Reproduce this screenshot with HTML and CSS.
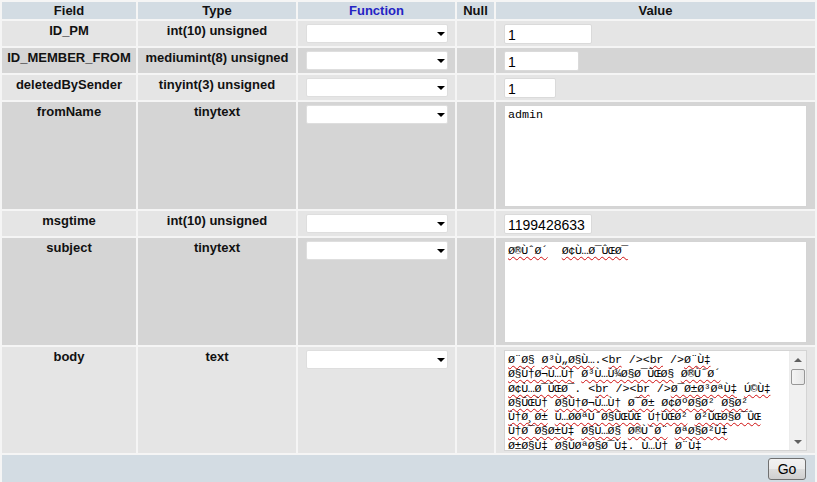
FILE: index.html
```html
<!DOCTYPE html>
<html>
<head>
<meta charset="utf-8">
<title>Insert row</title>
<link rel="stylesheet" href="styles.css">
</head>
<body>
<form class="edit-form">
<table class="grid">
  <colgroup>
    <col class="c-field"><col class="c-type"><col class="c-func"><col class="c-null"><col class="c-value">
  </colgroup>
  <thead>
    <tr>
      <th>Field</th>
      <th>Type</th>
      <th><a class="hlink" href="#">Function</a></th>
      <th>Null</th>
      <th>Value</th>
    </tr>
  </thead>
  <tbody>
    <tr class="odd">
      <td class="name">ID_PM</td>
      <td class="name">int(10) unsigned</td>
      <td class="func"><span class="sel-wrap"><select class="sel"><option></option></select></span></td>
      <td></td>
      <td class="val"><input class="in w88" type="text" value="1"></td>
    </tr>
    <tr class="even">
      <td class="name">ID_MEMBER_FROM</td>
      <td class="name">mediumint(8) unsigned</td>
      <td class="func"><span class="sel-wrap"><select class="sel"><option></option></select></span></td>
      <td></td>
      <td class="val"><input class="in w75" type="text" value="1"></td>
    </tr>
    <tr class="odd">
      <td class="name">deletedBySender</td>
      <td class="name">tinyint(3) unsigned</td>
      <td class="func"><span class="sel-wrap"><select class="sel"><option></option></select></span></td>
      <td></td>
      <td class="val"><input class="in w52" type="text" value="1"></td>
    </tr>
    <tr class="even">
      <td class="name">fromName</td>
      <td class="name">tinytext</td>
      <td class="func"><span class="sel-wrap"><select class="sel"><option></option></select></span></td>
      <td></td>
      <td class="val"><div class="ta" role="textbox"><div class="ta-text"><div class="ln">admin</div></div></div></td>
    </tr>
    <tr class="odd">
      <td class="name">msgtime</td>
      <td class="name">int(10) unsigned</td>
      <td class="func"><span class="sel-wrap"><select class="sel"><option></option></select></span></td>
      <td></td>
      <td class="val"><input class="in w88" type="text" value="1199428633"></td>
    </tr>
    <tr class="even">
      <td class="name">subject</td>
      <td class="name">tinytext</td>
      <td class="func"><span class="sel-wrap"><select class="sel"><option></option></select></span></td>
      <td></td>
      <td class="val"><div class="ta" role="textbox"><div class="ta-text"><div class="ln"><span class="sp">Ø®ÙˆØ´</span>  <span class="sp">Ø¢Ù…Ø¯ÛŒØ¯</span></div></div></div></td>
    </tr>
    <tr class="odd">
      <td class="name">body</td>
      <td class="name">text</td>
      <td class="func"><span class="sel-wrap"><select class="sel"><option></option></select></span></td>
      <td></td>
      <td class="val">
        <div class="ta ta-scroll" role="textbox">
          <div class="ta-text">
            <div class="ln"><span class="sp">Ø¨Ø§</span> <span class="sp">Ø³Ù„Ø§Ù…</span>.&lt;<span class="sp">br</span> /&gt;&lt;<span class="sp">br</span> /&gt;<span class="sp">Ø¨Ù‡</span></div>
            <div class="ln"><span class="sp">Ø§Ù†Ø¬Ù…Ù†</span> <span class="sp">Ø³Ù…Ù¾Ø§Ø¯ÛŒØ§</span> <span class="sp">Ø®ÙˆØ´</span></div>
            <div class="ln"><span class="sp">Ø¢Ù…Ø¯ÛŒØ¯</span>. &lt;<span class="sp">br</span> /&gt;&lt;<span class="sp">br</span> /&gt;<span class="sp">Ø¯Ø±Ø³ØªÙ‡</span> <span class="sp">Ú©Ù‡</span></div>
            <div class="ln"><span class="sp">Ø§ÛŒÙ†</span> <span class="sp">Ø§Ù†Ø¬Ù…Ù†</span> <span class="sp">Ø¯Ø±</span> <span class="sp">Ø¢ØºØ§Ø²</span> <span class="sp">Ø§Ø²</span></div>
            <div class="ln"><span class="sp">Ù†Ø¸Ø±</span> <span class="sp">Ù…Ø­ØªÙˆØ§ÛŒÛŒ</span> <span class="sp">Ú†ÛŒØ²</span> <span class="sp">Ø²ÛŒØ§Ø¯ÛŒ</span></div>
            <div class="ln"><span class="sp">Ù†Ø¯Ø§Ø±Ù‡</span> <span class="sp">Ø§Ù…Ø§</span> <span class="sp">Ø®ÙˆØ¨</span> <span class="sp">ØªØ§Ø²Ù‡</span></div>
            <div class="ln"><span class="sp">Ø±Ø§Ù‡</span> <span class="sp">Ø§ÙØªØ§Ø¯Ù‡</span>. <span class="sp">Ù…Ù†</span> <span class="sp">Ø¨Ù‡</span></div>
          </div>
          <div class="sbar">
            <div class="sb-btn"><span class="tri-up"></span></div>
            <div class="sb-thumb"></div>
            <div class="sb-track"></div>
            <div class="sb-btn"><span class="tri-down"></span></div>
          </div>
        </div>
      </td>
    </tr>
  </tbody>
  <tfoot>
    <tr>
      <td class="foot" colspan="5"><button class="go" type="button">Go</button></td>
    </tr>
  </tfoot>
</table>
</form>
</body>
</html>
```
FILE: styles.css
```css
* { box-sizing: border-box; }

html, body {
  margin: 0;
  padding: 0;
  background: #f5f5f5;
}

body {
  width: 817px;
  height: 482px;
  overflow: hidden;
  font-family: "Liberation Sans", Arial, sans-serif;
  font-size: 13px;
  color: #000;
}

.edit-form { margin: 0; }

.grid {
  border-collapse: separate;
  border-spacing: 2px;
  table-layout: fixed;
  width: 817px;
}

.c-field { width: 134px; }
.c-type  { width: 158px; }
.c-func  { width: 157px; }
.c-null  { width: 37px; }
.c-value { width: 319px; }

.grid th {
  background: #d3dce3;
  height: 17px;
  padding: 0 3px;
  font-weight: bold;
  font-size: 13px;
  line-height: 15px;
  text-align: center;
  vertical-align: middle;
  color: #111;
}

.hlink {
  color: #2424c4;
  text-decoration: none;
}

.grid td {
  padding: 2px 3px 3px;
  vertical-align: top;
  text-align: center;
  line-height: 15px;
}

.odd td  { background: #e5e5e5; }
.even td { background: #d5d5d5; }

.name {
  font-weight: bold;
  white-space: nowrap;
  color: #111;
}

.grid td.func { padding-top: 3px; padding-bottom: 2px; }

.sel-wrap {
  position: relative;
  display: inline-block;
  vertical-align: top;
}

.sel {
  -webkit-appearance: none;
  appearance: none;
  display: block;
  width: 142px;
  height: 19px;
  margin: 0;
  border: 1px solid #dedede;
  border-radius: 2px;
  background: #fff;
  font: 13px "Liberation Sans", Arial, sans-serif;
}

.sel-wrap::after {
  content: "";
  position: absolute;
  right: 3px;
  top: 8px;
  border-left: 4px solid transparent;
  border-right: 4px solid transparent;
  border-top: 4px solid #000;
}

.grid td.val {
  text-align: left;
  padding: 3px 8px 2px;
}

.in {
  display: block;
  height: 20px;
  margin: 0;
  padding: 1px 3px 0;
  border: 1px solid #dadada;
  border-radius: 2px;
  background: #fff;
  font: 14px "Liberation Sans", Arial, sans-serif;
  color: #000;
}

.w88 { width: 88px; }
.w75 { width: 75px; }
.w52 { width: 52px; }

.ta {
  display: flex;
  width: 303px;
  height: 102px;
  border: 1px solid #d4d4d4;
  background: #fff;
  font-family: "Liberation Mono", "Courier New", monospace;
  font-size: 11.7px;
  line-height: 14.3px;
  font-weight: normal;
  text-align: left;
  overflow: hidden;
}

.ta-scroll { height: 101px; }

.ta-text {
  flex: 1;
  min-width: 0;
  padding: 2px 3px 0;
  overflow: hidden;
}

.ln { white-space: pre; }

.sp {
  text-decoration: underline wavy #d01010;
  text-decoration-thickness: 1px;
  text-underline-offset: 2px;
  letter-spacing: -0.4px;
}

.sbar {
  flex: none;
  width: 17px;
  display: flex;
  flex-direction: column;
  background: #f0f0f0;
  border-left: 1px solid #ececec;
}

.sb-btn {
  height: 17px;
  display: flex;
  align-items: center;
  justify-content: center;
}

.tri-up {
  width: 0;
  height: 0;
  border-left: 4px solid transparent;
  border-right: 4px solid transparent;
  border-bottom: 4px solid #606060;
}

.tri-down {
  width: 0;
  height: 0;
  border-left: 4px solid transparent;
  border-right: 4px solid transparent;
  border-top: 4px solid #606060;
}

.sb-thumb {
  height: 16px;
  margin: 1px 1px 0;
  border: 1px solid #979797;
  border-radius: 2px;
  background: linear-gradient(to right, #f4f4f4, #e6e6e6);
}

.sb-track { flex: 1; }

.grid td.foot {
  background: #d3dce3;
  text-align: right;
  padding: 3px 9px 2px;
  height: 26px;
}

.go {
  width: 38px;
  height: 22px;
  margin: 0;
  padding: 0;
  border: 1px solid #707070;
  border-radius: 3px;
  background: linear-gradient(#f2f2f2 0%, #ebebeb 50%, #dddddd 51%, #cfcfcf 100%);
  font: 14px "Liberation Sans", Arial, sans-serif;
  color: #000;
}
```
